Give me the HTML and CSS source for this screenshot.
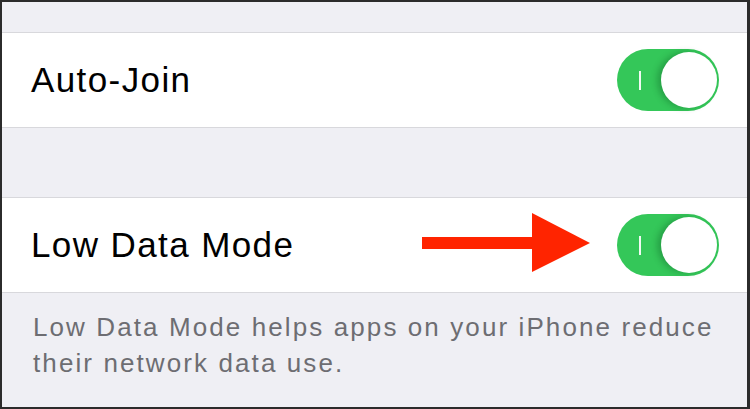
FILE: index.html
```html
<!DOCTYPE html>
<html lang="en">
<head>
    <meta charset="UTF-8">
    <title>Low Data Mode</title>
    <link rel="stylesheet" href="styles.css">
</head>
<body>
<div class="frame">
    <div class="spacer-top"></div>
    <div class="group">
        <div class="row">
            <span class="row-label">Auto-Join</span>
            <span class="switch"><span class="switch-mark"></span><span class="switch-knob"></span></span>
        </div>
    </div>
    <div class="spacer-mid"></div>
    <div class="group">
        <div class="row">
            <span class="row-label">Low Data Mode</span>
            <svg class="arrow" width="168" height="60" viewBox="0 0 168 60">
                <rect x="0" y="24" width="112" height="12" fill="#ff2400"/>
                <polygon points="110,0 168,30 110,59" fill="#ff2400"/>
            </svg>
            <span class="switch"><span class="switch-mark"></span><span class="switch-knob"></span></span>
        </div>
    </div>
    <p class="footer">Low Data Mode helps apps on your iPhone reduce their network data use.</p>
</div>
</body>
</html>
```

FILE: styles.css
```css
html, body{
    margin: 0;
    padding: 0;
}
body{
    width: 750px;
    height: 409px;
    overflow: hidden;
    font-family: "Liberation Sans", Arial, sans-serif;
}
.frame{
    box-sizing: border-box;
    height: 409px;
    border-style: solid;
    border-color: #2b2b2b;
    border-width: 2px 3px 2px 2px;
    background-color: #efeff4;
    display: flex;
    flex-direction: column;
}
.spacer-top{
    height: 30px;
}
.spacer-mid{
    height: 69px;
}
.group{
    background-color: #fff;
    border-top: 1px solid #d8d8dc;
    border-bottom: 1px solid #d8d8dc;
}
.row{
    height: 94px;
    display: flex;
    align-items: center;
    padding: 0 28px 0 29px;
}
.row-label{
    font-size: 35px;
    letter-spacing: 1.4px;
    color: #000;
}
/*箭头*/
.arrow{
    display: block;
    margin-left: auto;
    margin-right: 27px;
    margin-bottom: 4px;
}
/*开关*/
.switch{
    margin-left: auto;
    box-sizing: border-box;
    width: 102px;
    height: 62px;
    border-radius: 31px;
    background-color: #34c759;
    display: flex;
    align-items: center;
    padding: 0 2px 0 22px;
}
.arrow + .switch{
    margin-left: 0;
}
.switch-mark{
    width: 2px;
    height: 19px;
    background-color: #f0faf3;
}
.switch-knob{
    margin-left: auto;
    width: 56px;
    height: 56px;
    border-radius: 50%;
    background-color: #fff;
    box-shadow: -4px 0 6px rgba(0, 60, 20, .28);
}
.footer{
    margin: 0;
    padding: 16px 20px 0 31px;
    font-size: 26px;
    line-height: 36px;
    letter-spacing: 2.1px;
    color: #6d6d72;
}
```
